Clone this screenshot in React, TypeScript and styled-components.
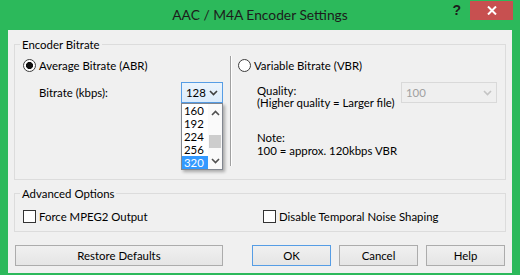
import * as React from "react";
import styled, { createGlobalStyle } from "styled-components";

const GlobalStyle = createGlobalStyle`
    html, body {
        margin: 0;
        padding: 0;
        background: #2cb95b;
    }
    body {
        font-family: Lato, "Liberation Sans", sans-serif;
        font-size: 11.4px;
        color: #000;
    }
`;

const listItems = ["160", "192", "224", "256", "320"];

const App: React.FC = () => {
    return (
        <Window>
            <GlobalStyle />
            <TitleBar>
                <span />
                <Title>AAC / M4A Encoder Settings</Title>
                <Controls>
                    <HelpGlyph>?</HelpGlyph>
                    <CloseButton>
                        <svg width="10" height="9" viewBox="0 0 10 9">
                            <path d="M1 0.5 L9 8.5 M9 0.5 L1 8.5" stroke="#fff" strokeWidth="2" />
                        </svg>
                    </CloseButton>
                </Controls>
            </TitleBar>
            <Client>
                <GroupBox $height={136}>
                    <Legend>Encoder Bitrate</Legend>
                    <BitrateGrid>
                        <LeftCol>
                            <OptionRow>
                                <Radio $checked />
                                Average Bitrate (ABR)
                            </OptionRow>
                            <BitrateRow>
                                <span>Bitrate (kbps):</span>
                                <Combo>
                                    <ComboBox $open>
                                        128
                                        <Chevron color="#404040" />
                                    </ComboBox>
                                    <DropList>
                                        <Items>
                                            {listItems.map((v) => (
                                                <Item key={v} $selected={v === "320"}>
                                                    {v}
                                                </Item>
                                            ))}
                                        </Items>
                                        <ScrollBar>
                                            <ArrowCell>
                                                <svg width="9" height="6" viewBox="0 0 9 6">
                                                    <path d="M1 5 L4.5 1.5 L8 5" stroke="#505050" strokeWidth="1.6" fill="none" />
                                                </svg>
                                            </ArrowCell>
                                            <Track>
                                                <Thumb />
                                            </Track>
                                            <ArrowCell>
                                                <svg width="9" height="6" viewBox="0 0 9 6">
                                                    <path d="M1 1 L4.5 4.5 L8 1" stroke="#505050" strokeWidth="1.6" fill="none" />
                                                </svg>
                                            </ArrowCell>
                                        </ScrollBar>
                                    </DropList>
                                </Combo>
                            </BitrateRow>
                        </LeftCol>
                        <Separator />
                        <RightCol>
                            <OptionRow>
                                <Radio />
                                Variable Bitrate (VBR)
                            </OptionRow>
                            <QualityRow>
                                <TextBlock>
                                    Quality:
                                    <br />
                                    (Higher quality = Larger file)
                                </TextBlock>
                                <ComboBox $disabled $width={96}>
                                    100
                                    <Chevron color="#c4c4c4" />
                                </ComboBox>
                            </QualityRow>
                            <Note>
                                Note:
                                <br />
                                100 = approx. 120kbps VBR
                            </Note>
                        </RightCol>
                    </BitrateGrid>
                </GroupBox>
                <GroupBox $height={39}>
                    <Legend>Advanced Options</Legend>
                    <CheckRow>
                        <OptionRow>
                            <CheckBox />
                            Force MPEG2 Output
                        </OptionRow>
                        <OptionRow>
                            <CheckBox />
                            Disable Temporal Noise Shaping
                        </OptionRow>
                    </CheckRow>
                </GroupBox>
                <ButtonRow>
                    <Button $width={208}>Restore Defaults</Button>
                    <Button $default>OK</Button>
                    <Button>Cancel</Button>
                    <Button>Help</Button>
                </ButtonRow>
            </Client>
        </Window>
    );
};

export default App;

const Chevron: React.FC<{ color: string }> = ({ color }) => (
    <ChevronIcon width="9" height="6" viewBox="0 0 9 6">
        <path d="M1 1 L4.5 4.5 L8 1" stroke={color} strokeWidth="1.6" fill="none" />
    </ChevronIcon>
);

const Window = styled.div`
    width: 520px;
    height: 275px;
    background: #2cb95b;
    display: flex;
    flex-direction: column;
    box-sizing: border-box;
`;

const TitleBar = styled.div`
    height: 30px;
    display: grid;
    grid-template-columns: 1fr auto 1fr;
    align-items: start;
`;

const Title = styled.div`
    font-size: 13.8px;
    line-height: 30px;
    color: #1c1c1c;
`;

const Controls = styled.div`
    display: flex;
    justify-content: flex-end;
    align-items: flex-start;
    padding-right: 7px;
`;

const HelpGlyph = styled.span`
    font-family: "Liberation Sans", sans-serif;
    font-weight: bold;
    font-size: 14px;
    line-height: 20px;
    color: #1c1c1c;
    margin-right: 9px;
`;

const CloseButton = styled.div`
    width: 43px;
    height: 19px;
    margin-top: 1px;
    background: #c75050;
    display: flex;
    align-items: center;
    justify-content: center;
`;

const Client = styled.div`
    flex: 1;
    margin: 0 8px 8px;
    padding: 14px 6px 7px;
    background: #f0f0f0;
    display: flex;
    flex-direction: column;
    gap: 13px;
`;

const GroupBox = styled.div<{ $height: number }>`
    height: ${(p) => p.$height}px;
    box-sizing: border-box;
    border: 1px solid #dcdcdc;
`;

const Legend = styled.div`
    width: fit-content;
    margin: -8px 0 0 5px;
    padding: 0 2px;
    height: 15px;
    line-height: 15px;
    background: #f0f0f0;
`;

const BitrateGrid = styled.div`
    display: grid;
    grid-template-columns: 215px 2px 1fr;
`;

const LeftCol = styled.div`
    padding: 5px 7px 0 8px;
`;

const RightCol = styled.div`
    padding: 5px 8px 0 6px;
`;

const Separator = styled.div`
    margin-top: 4px;
    height: 110px;
    border-left: 1px solid #a0a0a0;
    border-right: 1px solid #fff;
    box-sizing: border-box;
`;

const OptionRow = styled.label`
    display: flex;
    align-items: center;
    gap: 3px;
    height: 16px;
    white-space: nowrap;
`;

const Radio = styled.span<{ $checked?: boolean }>`
    width: 13px;
    height: 13px;
    box-sizing: border-box;
    border-radius: 50%;
    border: 1px solid #3c3c3c;
    background: ${(p) =>
        p.$checked ? "radial-gradient(circle, #111 0 3.3px, #fff 3.8px)" : "#fff"};
    flex: none;
`;

const CheckBox = styled.span`
    width: 13px;
    height: 13px;
    box-sizing: border-box;
    border: 1px solid #333;
    background: #fff;
    flex: none;
`;

const BitrateRow = styled.div`
    margin-top: 9px;
    padding-left: 16px;
    display: flex;
    justify-content: space-between;
    align-items: center;
    height: 21px;
`;

const Combo = styled.div`
    position: relative;
`;

const ComboBox = styled.div<{ $open?: boolean; $disabled?: boolean; $width?: number }>`
    width: ${(p) => p.$width ?? 42}px;
    height: 21px;
    box-sizing: border-box;
    padding: 0 4px;
    display: flex;
    flex: none;
    align-items: center;
    justify-content: space-between;
    border: 1px solid ${(p) => (p.$open ? "#569de5" : "#d9d9d9")};
    background: ${(p) =>
        p.$open ? "linear-gradient(#ebf4fc, #dcecfc)" : "#efefef"};
    color: ${(p) => (p.$disabled ? "#a0a0a0" : "#000")};
`;

const ChevronIcon = styled.svg`
    flex: none;
`;

const DropList = styled.div`
    position: absolute;
    top: 21px;
    left: 0;
    width: 42px;
    height: 67px;
    box-sizing: border-box;
    border: 1px solid #828790;
    background: #fff;
    box-shadow: 2px 2px 3px rgba(0, 0, 0, 0.3);
    display: flex;
    z-index: 2;
`;

const Items = styled.div`
    flex: 1;
`;

const Item = styled.div<{ $selected?: boolean }>`
    height: 13px;
    line-height: 13px;
    padding-left: 2px;
    background: ${(p) => (p.$selected ? "#3399ff" : "transparent")};
    color: ${(p) => (p.$selected ? "#fff" : "#000")};
`;

const ScrollBar = styled.div`
    width: 14px;
    display: flex;
    flex-direction: column;
    background: #fafafa;
`;

const ArrowCell = styled.div`
    height: 17px;
    display: flex;
    align-items: center;
    justify-content: center;
`;

const Track = styled.div`
    flex: 1;
    padding: 14px 1px 0;
`;

const Thumb = styled.div`
    height: 13px;
    background: #cdcdcd;
`;

const QualityRow = styled.div`
    margin-top: 9px;
    padding-left: 19px;
    display: flex;
    justify-content: space-between;
    align-items: flex-start;
`;

const TextBlock = styled.div`
    line-height: 12px;
    padding-top: 3px;
    white-space: nowrap;
`;

const Note = styled.div`
    margin-top: 22px;
    padding-left: 19px;
    line-height: 13px;
    white-space: nowrap;
`;

const CheckRow = styled.div`
    margin-top: 7px;
    padding-left: 8px;
    display: grid;
    grid-template-columns: 240px 1fr;
`;

const ButtonRow = styled.div`
    display: flex;
    gap: 8px;
    padding: 0 1px;
    height: 21px;
    & > :first-child {
        margin-right: auto;
    }
`;

const Button = styled.button<{ $width?: number; $default?: boolean }>`
    width: ${(p) => p.$width ?? 79}px;
    height: 21px;
    box-sizing: border-box;
    padding: 0;
    font: inherit;
    color: #000;
    border: 1px solid ${(p) => (p.$default ? "#569de5" : "#acacac")};
    background: linear-gradient(#f0f0f0, #e5e5e5);
`;
